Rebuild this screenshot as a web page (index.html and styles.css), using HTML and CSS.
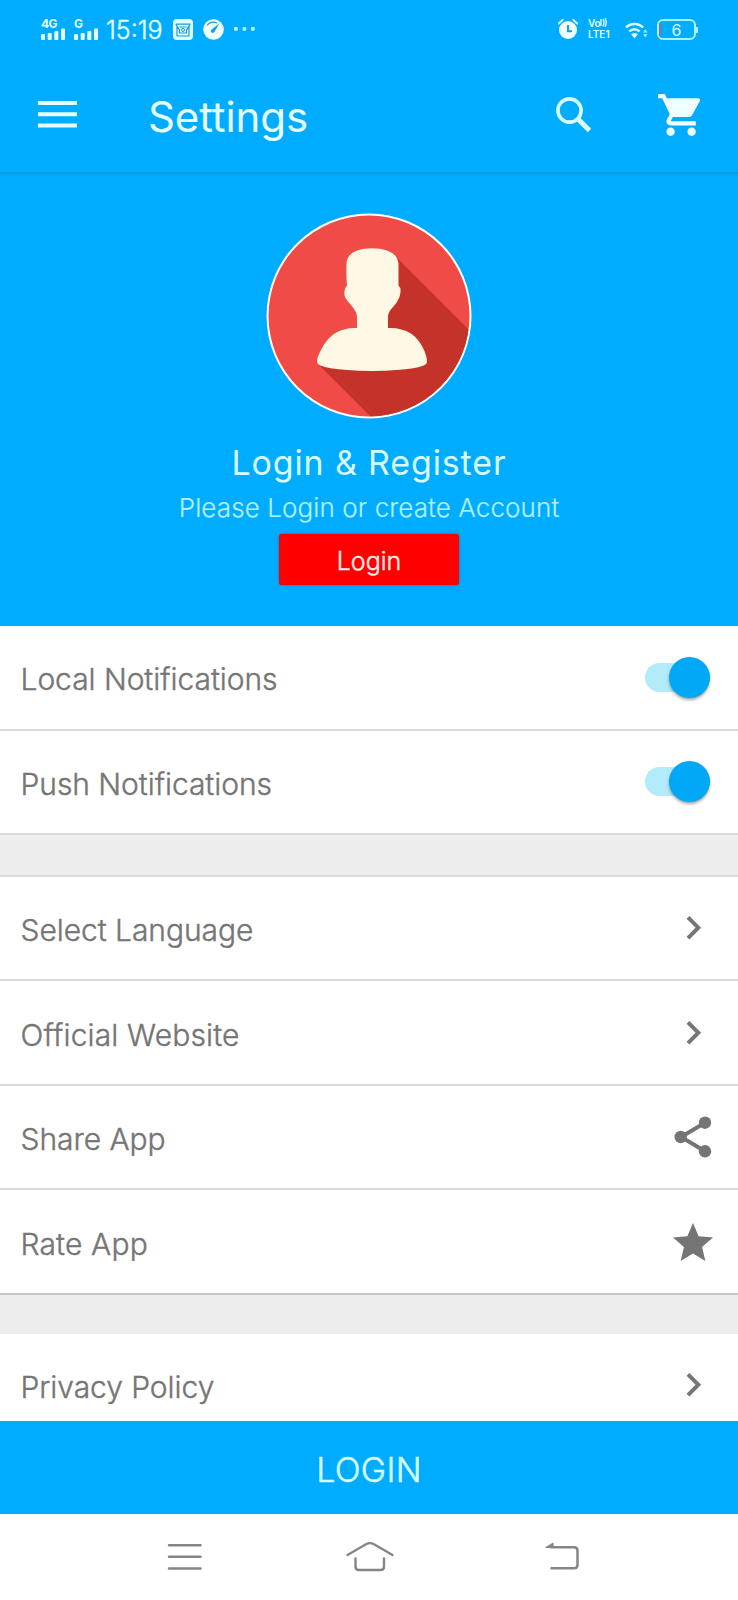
FILE: index.html
```html
<!DOCTYPE html>
<html lang="en">
<head>
<meta charset="utf-8">
<title>Settings</title>
<link rel="stylesheet" href="styles.css">
</head>
<body>
<div class="screen">
  <header class="top">
    <div class="status">
      <div class="signal">
        <span class="net">4G</span>
        <svg width="24" height="12" viewBox="0 0 24 12" fill="#e6ffff"><rect x="0" y="6" width="4" height="6" rx="1"/><rect x="6.700" y="5" width="4" height="7" rx="1"/><rect x="13.300" y="3" width="4" height="9" rx="1"/><rect x="20" y="0.500" width="4" height="11.500" rx="1"/></svg>
      </div>
      <div class="signal second">
        <span class="net">G</span>
        <svg width="24" height="12" viewBox="0 0 24 12" fill="#e6ffff"><rect x="0" y="6" width="4" height="6" rx="1"/><rect x="6.700" y="5" width="4" height="7" rx="1"/><rect x="13.300" y="3" width="4" height="9" rx="1"/><rect x="20" y="0.500" width="4" height="11.500" rx="1"/></svg>
      </div>
      <span class="clock">15:19</span>
      <svg class="ic-mail" width="20" height="21" viewBox="0 0 20 21"><rect width="20" height="21" rx="4" fill="#e6ffff"/><path d="M2.500 5.200h15M4 7.500v9.500h12V7.500M3 5.500l3.500 5.500v3h7v-3L17 5.500M6.500 8h7" fill="none" stroke="#0a9ee0" stroke-width="1.200"/><circle cx="10" cy="11" r="1.500" fill="none" stroke="#0a9ee0"/></svg>
      <svg class="ic-gauge" width="21" height="21" viewBox="0 0 21 21"><circle cx="10.500" cy="10.500" r="10.300" fill="#f2ffff"/><path d="M4 6.500a8 8 0 0 1 10-2.500" fill="none" stroke="#0a9ee0" stroke-width="1.200"/><path d="M16.500 4.200L8.600 10.400a1.900 1.900 0 1 0 2.700 2.600z" fill="#0aa4ee"/></svg>
      <svg class="ic-dots" width="21" height="4" viewBox="0 0 21 4" fill="#b4f4ff"><rect width="3.800" height="3.800" rx="1"/><rect x="8.500" width="3.800" height="3.800" rx="1"/><rect x="17" width="3.800" height="3.800" rx="1"/></svg>
      <span class="spacer"></span>
      <svg class="ic-alarm" width="20" height="20" viewBox="0 0 20 20"><circle cx="10" cy="11" r="9" fill="#f2ffff"/><path d="M.8 4.600L4.600 1M19.200 4.600L15.400 1" stroke="#d8fbff" stroke-width="2" stroke-linecap="round"/><path d="M10 6v6.200h4" fill="none" stroke="#00a2f2" stroke-width="1.900"/></svg>
      <div class="volte"><span class="vo">Vo<svg width="7" height="9" viewBox="0 0 7 9" fill="none" stroke="#d8fdff" stroke-width="1.400"><path d="M1 1v7M3 .8q2 3.500 0 7.400M5 .2q2.400 4 0 8.600"/></svg></span><span class="lte">LTE1</span></div>
      <svg class="ic-wifi" width="23" height="17" viewBox="0 0 23 17"><path d="M1 5.500C5.500.8 13.500.8 18 5.500M4.300 9.400c3-3 7.400-3 10.400 0" fill="none" stroke="#d8fdff" stroke-width="2.500"/><path d="M6.200 12.300q3.300-2.600 6.600 0L9.500 16.500z" fill="#e6ffff"/><path d="M18 10.500l2.300-3.200 2.300 3.200zM18 12.300l2.300 3.200 2.300-3.200z" fill="#b4f4ff"/></svg>
      <div class="battery"><span class="charge"></span>6</div>
    </div>
    <div class="appbar">
      <svg class="ic-menu" width="39" height="27" viewBox="0 0 39 27" fill="#e6ffff"><path d="M0 0h39v4H0zM0 11.300h39v4H0zM0 22.500h39v4H0z"/></svg>
      <h1 class="title">Settings</h1>
      <svg class="ic-search" width="36" height="36" viewBox="0 0 36 36" fill="none" stroke="#d8fdff"><circle cx="13.500" cy="13.500" r="11.600" stroke-width="3.600"/><path d="M22 22L33.500 33.500" stroke-width="5"/></svg>
      <svg class="ic-cart" width="42" height="42" viewBox="1 2 20 20" fill="#effeff"><path d="M7 18c-1.100 0-1.990.9-1.990 2S5.900 22 7 22s2-.9 2-2-.9-2-2-2zM1 2v2h2l3.600 7.590-1.350 2.450c-.16.280-.25.610-.25.960 0 1.100.9 2 2 2h12v-2H7.420c-.14 0-.25-.11-.25-.25l.03-.12.900-1.630h7.450c.75 0 1.410-.41 1.750-1.030l3.580-6.490c.08-.14.120-.31.120-.48 0-.55-.45-1-1-1H5.210l-.94-2H1zm16 16c-1.100 0-1.990.9-1.990 2s.89 2 1.990 2 2-.9 2-2-.9-2-2-2z"/></svg>
    </div>
  </header>

  <section class="hero">
    <svg class="avatar" width="206" height="206" viewBox="0 0 206 206">
      <defs><clipPath id="disc"><circle cx="103" cy="103" r="100.500"/></clipPath></defs>
      <circle cx="103" cy="103" r="102.500" fill="#fff"/>
      <g clip-path="url(#disc)">
        <rect width="206" height="206" fill="#f04b47"/>
        <path d="M131 45L215 129V216H117L53 152L106 130z" fill="#c53229"/>
      </g>
      <path d="M80.500 50Q82 35.500 106 35.200Q130 35.500 132.500 50V72.500Q136 75 133.500 84Q131 90 127 94Q122 99 122 104V115Q148 114 158 137Q161 144 161 149Q161 157 106 158Q51 157 51 149Q51 144 55 137Q66 114 91 115V104Q91 99 85 92Q81 88 79 84Q77 76 81 72.500Q80 60 80.500 50z" fill="#fff8e5"/>
    </svg>
    <h2 class="hero-title">Login &amp; Register</h2>
    <p class="hero-sub">Please Login or create Account</p>
    <button class="hero-btn">Login</button>
  </section>

  <main class="list">
    <section class="group">
      <div class="row"><span class="label">Local Notifications</span><span class="switch"><span class="knob"></span></span></div>
      <div class="row"><span class="label">Push Notifications</span><span class="switch"><span class="knob"></span></span></div>
    </section>
    <section class="group lined">
      <div class="row"><span class="label">Select Language</span><svg class="chev" width="17" height="26" viewBox="0 0 17 26"><path d="M3 2.300L13.300 12.700L3 23.100" fill="none" stroke="#757575" stroke-width="4"/></svg></div>
      <div class="row"><span class="label wide">Official Website</span><svg class="chev" width="17" height="26" viewBox="0 0 17 26"><path d="M3 2.300L13.300 12.700L3 23.100" fill="none" stroke="#757575" stroke-width="4"/></svg></div>
      <div class="row"><span class="label">Share App</span><svg class="share" width="38" height="42" viewBox="0 0 38 42"><path d="M31.500 6.500L7 21L31.500 35.500" fill="none" stroke="#757575" stroke-width="4"/><g fill="#757575"><circle cx="31" cy="6.700" r="6.200"/><circle cx="6.700" cy="21" r="6.200"/><circle cx="31" cy="35.300" r="6.200"/></g></svg></div>
      <div class="row dark"><span class="label wide">Rate App</span><svg class="star" width="40" height="38" viewBox="2 2 20 19" fill="#757575"><path d="M12 17.270L18.180 21l-1.640-7.030L22 9.240l-7.190-.61L12 2 9.190 8.630 2 9.240l5.460 4.730L5.820 21z"/></svg></div>
    </section>
    <section class="group policy">
      <div class="row"><span class="label">Privacy Policy</span><svg class="chev" width="17" height="26" viewBox="0 0 17 26"><path d="M3 2.300L13.300 12.700L3 23.100" fill="none" stroke="#757575" stroke-width="4"/></svg></div>
    </section>
  </main>

  <button class="login-bar">LOGIN</button>

  <nav class="nav">
    <svg width="36" height="30" viewBox="0 0 36 30" fill="none" stroke="#858585" stroke-width="2.500" stroke-linecap="round"><path d="M2 3.300h31.500M2 14.800h31.500M2 26.500h31.500"/></svg>
    <svg class="home" width="50" height="34" viewBox="0 0 50 34" fill="none" stroke="#858585" stroke-width="2.400" stroke-linecap="round" stroke-linejoin="round"><path d="M2.500 15L21 4.300Q25 2 29 4.300L47.500 15M10.500 18.500V26.500Q10.500 30 14 30H35.500Q39 30 39 26.500V18.500"/></svg>
    <svg width="36" height="32" viewBox="0 0 36 32" fill="none" stroke="#858585" stroke-width="2.500" stroke-linecap="round" stroke-linejoin="round"><path d="M7 6.200H30Q33.500 6.200 33.500 9.500V24Q33.500 27.300 30 27.300H7.500"/><path d="M2 6.500L9 2.300V6.500z" fill="#858585" stroke-width="1.200"/></svg>
  </nav>
</div>
</body>
</html>
```
FILE: styles.css
```css
* { box-sizing: border-box; }

body {
  margin: 0;
  font-family: Inter, Roboto, sans-serif;
}

.screen {
  width: 738px;
  height: 1600px;
  display: flex;
  flex-direction: column;
  overflow: hidden;
  background: #fff;
}

.top {
  flex: none;
  height: 172px;
  background: #00acff;
}

.status {
  height: 58px;
  padding: 0 42px 0 41px;
  display: flex;
  align-items: center;
  color: #e6ffff;
}

.signal {
  display: flex;
  flex-direction: column;
  width: 24px;
  height: 21px;
}

.second { margin-left: 9px; }

.net {
  height: 9px;
  font-size: 12px;
  line-height: 10px;
  font-weight: 700;
  letter-spacing: -0.5px;
}

.clock {
  margin-left: 8px;
  width: 58px;
  font-size: 25px;
  font-weight: 300;
  -webkit-text-stroke: 0.4px;
  white-space: nowrap;
  padding-top: 2px;
}

.ic-mail { margin-left: 9px; }
.ic-gauge { margin-left: 10px; }
.ic-dots { margin-left: 10px; }
.spacer { flex: 1; }

.volte {
  width: 24px;
  margin: 0 13px 0 10px;
  display: flex;
  flex-direction: column;
  white-space: nowrap;
}

.vo, .lte {
  height: 11px;
  font-size: 10px;
  line-height: 11px;
  font-weight: 600;
}

.vo { letter-spacing: -0.3px; }
.ic-wifi { margin: 3px 9px 0 0; }

.battery {
  position: relative;
  width: 39px;
  height: 21px;
  border: 2px solid #a8f2ff;
  border-radius: 6px;
  font-size: 16px;
  line-height: 18px;
  text-align: center;
}

.battery::after {
  content: "";
  position: absolute;
  right: -4px;
  top: 6px;
  width: 2px;
  height: 6px;
  background: #a8f2ff;
}

.charge {
  position: absolute;
  left: 0;
  top: 2px;
  width: 2px;
  height: 13px;
  background: #8a6f9c;
}

.appbar {
  height: 114px;
  padding: 0 38px 0 38px;
  display: flex;
  align-items: center;
}

.ic-menu { margin-bottom: 1px; }

.title {
  flex: 1;
  margin: 4px 0 0 71px;
  font-size: 42px;
  font-weight: 400;
  line-height: 50px;
  letter-spacing: -0.1px;
  color: #e6ffff;
}

.ic-search { margin-right: 66px; }

.hero {
  flex: none;
  height: 454px;
  padding-top: 41px;
  display: flex;
  flex-direction: column;
  align-items: center;
  background: linear-gradient(#0c9de4, #00acff 5px);
}

.avatar { flex: none; }

.hero-title {
  margin: 24px 0 0;
  font-size: 34px;
  line-height: 40px;
  font-weight: 400;
  letter-spacing: 0.85px;
  color: #d8fbff;
}

.hero-sub {
  margin: 9px 0 0;
  font-size: 26px;
  line-height: 32px;
  font-weight: 300;
  letter-spacing: 0.1px;
  -webkit-text-stroke: 0.2px;
  color: #b2f0ff;
}

.hero-btn {
  width: 180px;
  height: 51px;
  margin: 10px 0 0;
  padding: 3px 0 0;
  border: 0;
  border-radius: 3px;
  background: #f00;
  box-shadow: 0 0 2px #55405f;
  font: 300 25px/30px Inter, Roboto, sans-serif;
  -webkit-text-stroke: 0.4px;
  color: #fff0ec;
}

.list {
  flex: none;
  height: 795px;
  overflow: hidden;
  background: #ededed;
}

.group { background: #fff; }

.row {
  height: 104.600px;
  padding: 0 28px 0 20.500px;
  display: flex;
  align-items: center;
  justify-content: space-between;
  border-bottom: 2px solid #dadada;
}

.dark { border-bottom-color: #c6c6c6; }

.lined {
  margin-top: 39.500px;
  border-top: 2px solid #dcdcdc;
}

.policy { margin-top: 38.500px; }

.label {
  padding-top: 4px;
  font-size: 30px;
  line-height: 40px;
  font-weight: 300;
  letter-spacing: -0.05px;
  -webkit-text-stroke: 0.4px;
  color: #757575;
}

.wide { letter-spacing: 0.15px; }

.switch {
  width: 65px;
  height: 29px;
  display: flex;
  align-items: center;
  justify-content: flex-end;
  border-radius: 15px;
  background: #b2ebfc;
}

.knob {
  width: 41px;
  height: 41px;
  border-radius: 50%;
  background: #00a8f5;
  box-shadow: 0 2px 3px rgba(0, 0, 0, 0.35);
}

.chev { margin-right: 8px; }
.share { margin-right: -2px; }
.star { margin-right: -3px; }

.login-bar {
  flex: none;
  height: 93px;
  padding: 4px 0 0;
  border: 0;
  background: #00acff;
  font: 300 34px/40px Inter, Roboto, sans-serif;
  letter-spacing: 0.3px;
  -webkit-text-stroke: 0.5px;
  color: #d8fdff;
}

.nav {
  height: 86px;
  padding: 0 158px 0 167px;
  display: flex;
  align-items: center;
  justify-content: space-between;
}

.home { margin-right: 8px; }
```
